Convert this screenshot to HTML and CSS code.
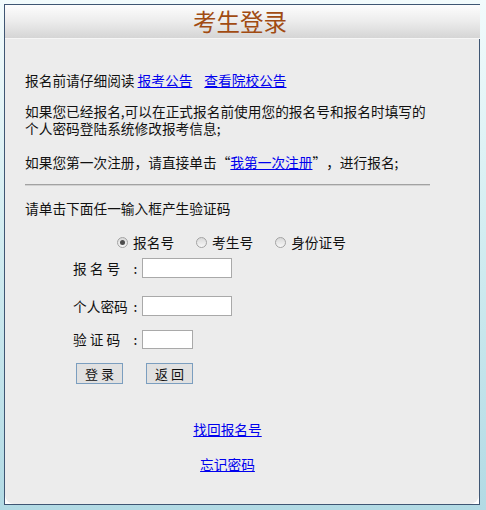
FILE: index.html
```html
<!DOCTYPE html>
<html lang="zh-CN">
<head>
<meta charset="utf-8">
<title>考生登录</title>
<link rel="stylesheet" href="styles.css">
</head>
<body>
<div class="panel">
  <div class="header">考生登录</div>
  <div class="content">
    <div class="inner">
      <p class="p1">报名前请仔细阅读 <a href="#">报考公告</a><a href="#" class="gap">查看院校公告</a></p>
      <p class="p2">如果您已经报名,可以在正式报名前使用您的报名号和报名时填写的<br>个人密码登陆系统修改报考信息;</p>
      <p class="p3">如果您第一次注册，请直接单击<span class="ql">“</span><a href="#">我第一次注册</a><span class="qr">”</span>，进行报名;</p>
      <div class="rule"></div>
      <p class="p4">请单击下面任一输入框产生验证码</p>
      <div class="radios">
        <label class="radio"><input type="radio" name="t" checked><span>报名号</span></label>
        <label class="radio"><input type="radio" name="t"><span>考生号</span></label>
        <label class="radio"><input type="radio" name="t"><span>身份证号</span></label>
      </div>
      <div class="row r1">
        <span class="lbl"><span class="lt">报 名 号</span><span class="colon">:</span></span>
        <input type="text" class="inp">
      </div>
      <div class="row r2">
        <span class="lbl"><span class="lt">个人密码</span><span class="colon">:</span></span>
        <input type="password" class="inp">
      </div>
      <div class="row r3">
        <span class="lbl"><span class="lt">验 证 码</span><span class="colon">:</span></span>
        <input type="text" class="inp short">
      </div>
      <div class="buttons">
        <button class="btn">登 录</button>
        <button class="btn">返 回</button>
      </div>
      <div class="links">
        <a href="#" class="l1">找回报名号</a>
        <a href="#" class="l2">忘记密码</a>
      </div>
    </div>
  </div>
</div>
</body>
</html>
```
FILE: styles.css
```css
html, body {
  margin: 0;
  padding: 0;
  height: 510px;
}
body {
  background: linear-gradient(to bottom, #f2fbfc 0%, #d3edf1 45%, #b2dae4 100%);
  font-family: "Noto Sans CJK SC", "Microsoft YaHei", sans-serif;
  font-size: 13.7px;
  line-height: 17px;
  color: #111;
  overflow: hidden;
}
.panel {
  margin: 4px 0 0 4px;
  width: 474px;
  border: 1px solid #3f5673;
  background: #fff;
}
.header {
  height: 33px;
  line-height: 33px;
  margin-right: -1px;
  padding-right: 5px;
  text-align: center;
  font-size: 23.5px;
  color: #a14b12;
  background: linear-gradient(to bottom, #fdfdfd 0%, #ececec 50%, #d5d5d5 100%);
  border-bottom: 1px solid #f6f6f6;
}
.content {
  height: 465px;
  box-sizing: border-box;
  background: #ececec;
  border-radius: 0 0 9px 9px;
  padding: 33px 0 0 20px;
}
.inner {
  width: 405px;
}
p {
  margin: 0;
}
a {
  color: #0000ee;
  text-decoration: underline;
}
.gap {
  margin-left: 12px;
}
.ql, .qr {
  display: inline-block;
  width: 13.7px;
}
.ql {
  text-align: right;
}
.qr {
  text-align: left;
}
.p2 {
  margin-top: 14px;
  width: 440px;
  white-space: nowrap;
}
.p3 {
  margin-top: 17px;
}
.rule {
  margin-top: 13px;
  border-top: 1px solid #a2a2a2;
  border-bottom: 1px solid #d2d2d2;
}
.p4 {
  margin-top: 14px;
}
.radios {
  margin-top: 17px;
  padding-left: 92px;
  display: flex;
  gap: 22px;
}
.radio {
  display: flex;
  align-items: center;
}
.radio input {
  appearance: none;
  -webkit-appearance: none;
  margin: 0 5px 0 0;
  width: 11px;
  height: 11px;
  border-radius: 50%;
  border: 1px solid #a3a3a3;
  background: linear-gradient(to bottom, #d9d9d9, #f7f7f7);
  box-sizing: border-box;
  position: relative;
}
.radio input:checked::after {
  content: "";
  position: absolute;
  left: 2px;
  top: 2px;
  width: 5px;
  height: 5px;
  border-radius: 50%;
  background: #4d4d4d;
}
.row {
  display: flex;
  align-items: center;
  padding-left: 48px;
}
.r1 {
  margin-top: 7px;
}
.r2 {
  margin-top: 18px;
}
.r3 {
  margin-top: 14px;
}
.lbl {
  display: flex;
  width: 69px;
}
.lt {
  flex: 1;
}
.colon {
  width: 13px;
  text-align: center;
}
.inp {
  width: 90px;
  height: 20px;
  box-sizing: border-box;
  border: 1px solid #a9a9a9;
  background: #fff;
  margin: 0;
  padding: 0 2px;
}
.inp.short {
  width: 51px;
  height: 19px;
}
.buttons {
  margin-top: 14px;
  padding-left: 51px;
  display: flex;
  gap: 23px;
}
.btn {
  width: 47px;
  height: 21px;
  box-sizing: border-box;
  border: 1px solid #7b9ebf;
  background: #e1e1e1;
  font-family: "Noto Sans CJK SC", sans-serif;
  font-size: 13px;
  line-height: 17px;
  padding: 0;
  color: #111;
}
.links {
  display: flex;
  flex-direction: column;
  align-items: center;
  margin-top: 37px;
}
.l2 {
  margin-top: 18px;
}
```
